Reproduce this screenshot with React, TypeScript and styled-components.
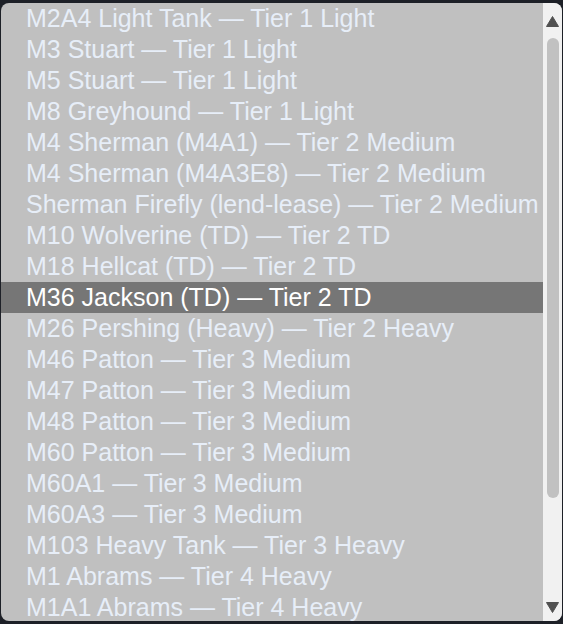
import React from 'react';
import styled, { createGlobalStyle } from 'styled-components';

const Global = createGlobalStyle`
  html, body {
    margin: 0;
    padding: 0;
    background: #1d2027;
    height: 100%;
    overflow: hidden;
  }
`;

const Frame = styled.div`
  margin: 3px 0 0 1px;
  width: 561px;
  height: 618px;
  border-radius: 8px;
  background: #c0c0c0;
  overflow: hidden;
  display: flex;
`;

const List = styled.ul`
  flex: 1;
  margin: 0;
  padding: 0;
  list-style: none;
  overflow: hidden;
  font-family: "Liberation Sans", Arial, sans-serif;
  font-size: 25px;
`;

const Option = styled.li<{ $selected?: boolean }>`
  height: 31px;
  line-height: 30px;
  padding-left: 26px;
  white-space: nowrap;
  color: ${p => (p.$selected ? '#ffffff' : '#e7eef8')};
  background: ${p => (p.$selected ? '#767676' : 'transparent')};
  margin-left: -1px;
`;

const Scrollbar = styled.div`
  width: 19px;
  background: #f1f1f1;
  display: flex;
  flex-direction: column;
  align-items: center;
  padding: 13px 0 8px;
  box-sizing: border-box;
`;

const Arrow = styled.svg`
  width: 13px;
  height: 11px;
  flex: none;
  display: block;
`;

const Track = styled.div`
  flex: 1;
  width: 100%;
  display: flex;
  justify-content: center;
  padding: 11px 0 0;
  box-sizing: border-box;
`;

const Thumb = styled.div`
  width: 12px;
  height: 460px;
  border-radius: 6px;
  background: #c1c1c1;
`;

const items = [
  'M2A4 Light Tank — Tier 1 Light',
  'M3 Stuart — Tier 1 Light',
  'M5 Stuart — Tier 1 Light',
  'M8 Greyhound — Tier 1 Light',
  'M4 Sherman (M4A1) — Tier 2 Medium',
  'M4 Sherman (M4A3E8) — Tier 2 Medium',
  'Sherman Firefly (lend-lease) — Tier 2 Medium',
  'M10 Wolverine (TD) — Tier 2 TD',
  'M18 Hellcat (TD) — Tier 2 TD',
  'M36 Jackson (TD) — Tier 2 TD',
  'M26 Pershing (Heavy) — Tier 2 Heavy',
  'M46 Patton — Tier 3 Medium',
  'M47 Patton — Tier 3 Medium',
  'M48 Patton — Tier 3 Medium',
  'M60 Patton — Tier 3 Medium',
  'M60A1 — Tier 3 Medium',
  'M60A3 — Tier 3 Medium',
  'M103 Heavy Tank — Tier 3 Heavy',
  'M1 Abrams — Tier 4 Heavy',
  'M1A1 Abrams — Tier 4 Heavy',
];

const App: React.FC = () => (
  <>
    <Global />
    <Frame>
      <List>
        {items.map((t, i) => (
          <Option key={t} $selected={i === 9}>{t}</Option>
        ))}
      </List>
      <Scrollbar>
        <Arrow viewBox="0 0 13 11">
          <path d="M6.5 0.5 L12.5 10.5 L0.5 10.5 Z" fill="#505050" strokeLinejoin="round" stroke="#505050" strokeWidth="1" />
        </Arrow>
        <Track>
          <Thumb />
        </Track>
        <Arrow viewBox="0 0 13 11">
          <path d="M0.5 0.5 L12.5 0.5 L6.5 10.5 Z" fill="#505050" strokeLinejoin="round" stroke="#505050" strokeWidth="1" />
        </Arrow>
      </Scrollbar>
    </Frame>
  </>
);

export default App;
